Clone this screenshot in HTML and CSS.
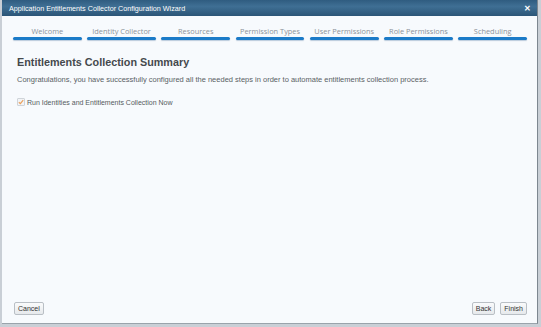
FILE: index.html
```html
<!DOCTYPE html>
<html>
<head>
<meta charset="utf-8">
<link rel="stylesheet" href="styles.css">
</head>
<body>
<div class="desk">
  <div class="dialog">
    <div class="titlebar">
      <span class="title">Application Entitlements Collector Configuration Wizard</span>
      <span class="close">&#x2715;</span>
    </div>
    <div class="body">
      <div class="steps">
        <div class="step"><span>Welcome</span><i></i></div>
        <div class="step"><span>Identity Collector</span><i></i></div>
        <div class="step"><span>Resources</span><i></i></div>
        <div class="step"><span>Permission Types</span><i></i></div>
        <div class="step"><span>User Permissions</span><i></i></div>
        <div class="step"><span>Role Permissions</span><i></i></div>
        <div class="step"><span>Scheduling</span><i></i></div>
      </div>
      <div class="content">
        <h1>Entitlements Collection Summary</h1>
        <p class="msg">Congratulations, you have successfully configured all the needed steps in order to automate entitlements collection process.</p>
        <label class="check"><span class="box"><svg width="6" height="6" viewBox="0 0 6 6"><path d="M0.8 3.2 L2.4 4.7 L5.2 1.2" fill="none" stroke="#eba25e" stroke-width="1.2"/></svg></span>Run Identities and Entitlements Collection Now</label>
      </div>
      <div class="footer">
        <button class="btn">Cancel</button>
        <div class="right">
          <button class="btn">Back</button>
          <button class="btn">Finish</button>
        </div>
      </div>
    </div>
  </div>
</div>
</body>
</html>
```
FILE: styles.css
```css
html, body { margin: 0; padding: 0; }
body {
  width: 541px; height: 327px; overflow: hidden;
  background: #c9cfd6;
  font-family: "Liberation Sans", Arial, sans-serif;
}
.desk { padding: 0 3px 0 2px; height: 327px; box-sizing: border-box; }
.dialog {
  height: 324px; box-sizing: border-box;
  display: flex; flex-direction: column;
  border-right: 1px solid #7d8790;
  border-bottom: 1px solid #9aa3ab;
  background: #f7fafd;
}
.titlebar {
  height: 16px; flex: none;
  background: linear-gradient(#2f5c80, #3f6f94 40%, #2b5577);
  display: flex; align-items: center; justify-content: space-between;
  padding: 0 6px 0 7px; color: #fff;
}
.title { font-size: 7.2px; }
.close { font-size: 8px; font-weight: bold; }
.body { flex: 1; display: flex; flex-direction: column; padding: 0 10px 0 11px; }
.steps {
  display: grid; grid-template-columns: repeat(7, 1fr); column-gap: 5.5px;
  padding: 10px 0 0 0;
}
.step { display: flex; flex-direction: column; align-items: center; }
.step span {
  font-family: "Open Sans", sans-serif; font-size: 7.4px; color: #8c9299;
  line-height: 10px;
}
.step i {
  display: block; width: 100%; height: 3px; margin-top: 1px;
  background: #1b7bc8; border-radius: 2px;
  box-shadow: 0 1px 1px rgba(0,60,120,0.25);
}
.content { padding: 15px 0 0 4px; flex: 1; }
h1 {
  margin: 0; font-size: 10.8px; font-weight: bold; color: #45494d; line-height: 14px;
}
.msg { margin: 6px 0 0 0; font-size: 7.5px; color: #5a5f65; line-height: 10px; }
.check {
  display: flex; align-items: center; margin-top: 13px;
  font-size: 7px; color: #555a60;
}
.box {
  width: 6px; height: 6px; border: 1px solid #cfd4d9; background: #f2f4f7;
  display: inline-flex; align-items: center; justify-content: center; margin-right: 2px;
  border-radius: 1px;
}
.footer { display: flex; justify-content: space-between; padding: 0 0 8px 1px; align-items: center; }
.right { display: flex; gap: 5px; }
.btn {
  font-family: "Liberation Sans", Arial, sans-serif; font-size: 7px; color: #333;
  background: linear-gradient(#fafbfc, #e6e9ec); border: 1px solid #b9bfc5;
  border-radius: 2px; height: 13px; padding: 0 3px; line-height: 11px;
}
```
